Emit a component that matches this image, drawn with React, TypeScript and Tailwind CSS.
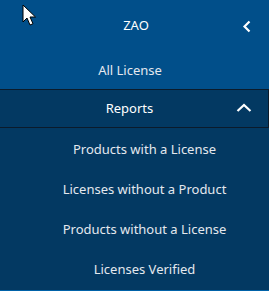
const items = [
  "Products with a License",
  "Licenses without a Product",
  "Products without a License",
  "Licenses Verified",
];

const App = () => {
  return (
    <div
      className="w-[269px] h-[291px] flex flex-col bg-[#033962] text-[13px] text-[#e4e8ee] relative"
      style={{ fontFamily: '"Noto Sans", "Open Sans", sans-serif' }}
    >
      {/* Header */}
      <div className="bg-[#014f8a] flex flex-col">
        <div className="h-[52px] flex items-center justify-center relative text-white pl-[3px]">
          ZAO
          <svg
            className="absolute right-[17px] top-[20px]"
            width="10"
            height="13"
            viewBox="0 0 10 13"
            fill="none"
          >
            <path d="M7.5 1.5L2.5 6.5l5 5" stroke="white" strokeWidth="2.2" />
          </svg>
        </div>
        <div className="h-[37px] flex items-center justify-center pr-[9px]">All License</div>
      </div>

      {/* Reports */}
      <div className="h-[40px] border-y border-r border-[#0b1b2b] flex items-center justify-center relative text-white pr-[9px]">
        Reports
        <svg
          className="absolute right-[16px] top-[13px]"
          width="16"
          height="10"
          viewBox="0 0 16 10"
          fill="none"
        >
          <path d="M1.5 8L8 2l6.5 6" stroke="white" strokeWidth="2.2" />
        </svg>
      </div>

      <div className="flex flex-col mt-[2px] pl-[20px]">
        {items.map((item) => (
          <div key={item} className="h-[40px] flex items-center justify-center">
            {item}
          </div>
        ))}
      </div>
      <div className="h-px bg-[#0062a8] mt-auto" />

      {/* mouse pointer */}
      <svg
        className="absolute left-[22px] top-[4px]"
        width="14"
        height="22"
        viewBox="0 0 14 22"
      >
        <path
          d="M1 1v17l4-4 3 7 3-1.3-3-6.7h5.5z"
          fill="white"
          stroke="black"
          strokeWidth="1"
        />
      </svg>
    </div>
  );
};

export default App;
